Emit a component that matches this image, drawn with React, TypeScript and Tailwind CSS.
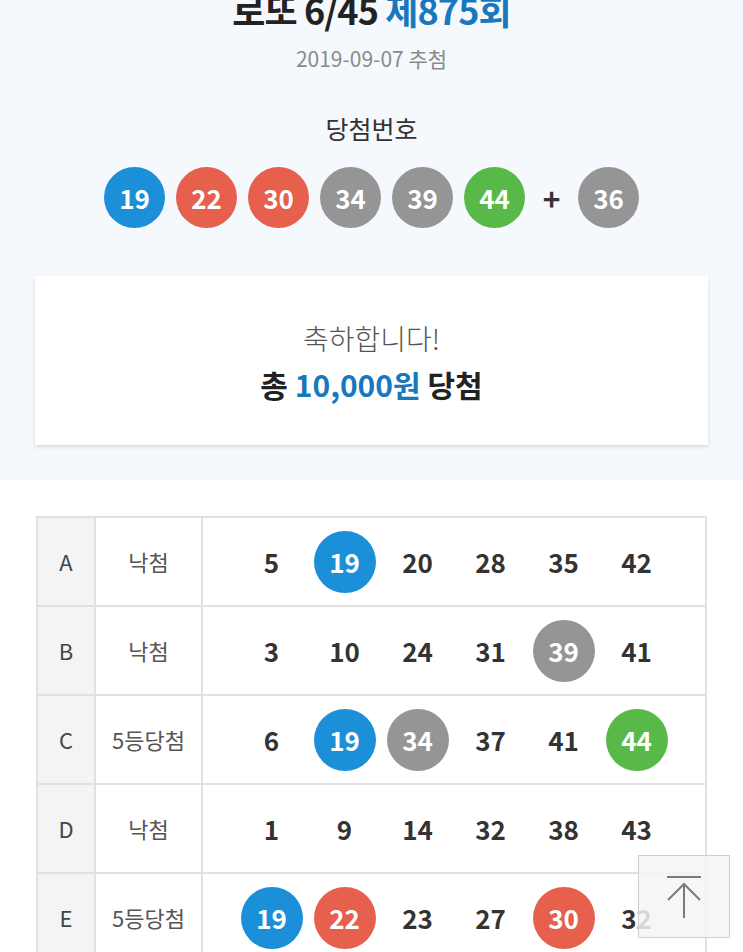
import React from 'react';

type Color = 'blue' | 'red' | 'gray' | 'green';

const BALL_BG: Record<Color, string> = {
  blue: 'bg-[#1b8fd7]',
  red: 'bg-[#e6604d]',
  gray: 'bg-[#959595]',
  green: 'bg-[#59b948]',
};

const colorOf = (n: number): Color => {
  if (n <= 10) return 'gray';
  if (n <= 20) return 'blue';
  if (n <= 30) return 'red';
  if (n <= 40) return 'gray';
  return 'green';
};

const WIN = [19, 22, 30, 34, 39, 44];
const BONUS = 36;

const ROWS: { label: string; result: string; nums: number[] }[] = [
  { label: 'A', result: '낙첨', nums: [5, 19, 20, 28, 35, 42] },
  { label: 'B', result: '낙첨', nums: [3, 10, 24, 31, 39, 41] },
  { label: 'C', result: '5등당첨', nums: [6, 19, 34, 37, 41, 44] },
  { label: 'D', result: '낙첨', nums: [1, 9, 14, 32, 38, 43] },
  { label: 'E', result: '5등당첨', nums: [19, 22, 23, 27, 30, 32] },
];

const Ball: React.FC<{ n: number; size?: string }> = ({ n, size = 'w-[61px] h-[61px]' }) => (
  <span
    className={`${size} ${BALL_BG[colorOf(n)]} rounded-full flex items-center justify-center text-white text-[26px] font-semibold leading-none`}
  >
    {n}
  </span>
);

export default function App() {
  return (
    <div className="min-h-[952px] bg-white font-['Noto_Sans_CJK_KR','Noto_Sans',sans-serif] text-[#333] overflow-hidden">
      {/* Header summary */}
      <section className="bg-[#f5f8fc] flex flex-col items-center pb-[35px]">
        <h1 className="-mt-[11px] h-[40px] leading-[40px] text-[36px] font-bold text-[#222] tracking-tight">
          로또 6/45 <span className="text-[#1878bd]">제875회</span>
        </h1>
        <p className="mt-[16px] leading-[26px] text-[21px] text-[#8a8a8a]">2019-09-07 추첨</p>
        <h2 className="mt-[42px] leading-[30px] text-[25px] font-normal text-[#333]">당첨번호</h2>
        <div className="mt-[24px] flex items-center gap-[11px]">
          {WIN.map(n => (
            <Ball key={n} n={n} />
          ))}
          <span className="w-[31px] text-center text-[30px] font-semibold text-[#333] leading-none">+</span>
          <Ball n={BONUS} />
        </div>
        <div className="mt-[48px] w-[673px] h-[169px] bg-white shadow-[0_2px_4px_rgba(0,0,0,0.12)] flex flex-col items-center justify-center gap-[12px]">
          <p className="text-[28px] leading-[34px] text-[#555] font-light">축하합니다!</p>
          <p className="text-[30px] leading-[34px] font-bold text-[#222]">
            총 <span className="text-[#1878bd]">10,000원</span> 당첨
          </p>
        </div>
      </section>

      {/* My numbers */}
      <section className="pt-[36px] px-[36px]">
        <div className="border-t-2 border-l-2 border-[#e1e1e1]">
          {ROWS.map(row => (
            <div key={row.label} className="flex h-[89px] border-b-2 border-[#e1e1e1]">
              <div className="w-[58px] bg-[#f4f4f4] border-r-2 border-[#e1e1e1] flex items-center justify-center text-[22px] text-[#444]">
                {row.label}
              </div>
              <div className="w-[107px] border-r-2 border-[#e1e1e1] flex items-center justify-center text-[22px] text-[#555]">
                {row.result}
              </div>
              <div className="flex-1 border-r-2 border-[#e1e1e1] flex items-center justify-center">
                {row.nums.map(n => (
                  <div key={n} className="w-[73px] flex justify-center">
                    {WIN.includes(n) ? (
                      <Ball n={n} size="w-[62px] h-[62px]" />
                    ) : (
                      <span className="text-[26px] font-semibold text-[#333]">{n}</span>
                    )}
                  </div>
                ))}
              </div>
            </div>
          ))}
        </div>
      </section>

      {/* Back to top */}
      <button className="fixed right-[13px] bottom-[14px] w-[92px] h-[83px] bg-[#f4f4f4]/85 border border-[#cfcfcf] flex items-center justify-center">
        <svg width="40" height="46" viewBox="0 0 40 46" fill="none" stroke="#7a7a7a" strokeWidth="2">
          <line x1="3" y1="3" x2="37" y2="3" />
          <line x1="20" y1="10" x2="20" y2="44" />
          <polyline points="4,26 20,10 36,26" />
        </svg>
      </button>
    </div>
  );
}
